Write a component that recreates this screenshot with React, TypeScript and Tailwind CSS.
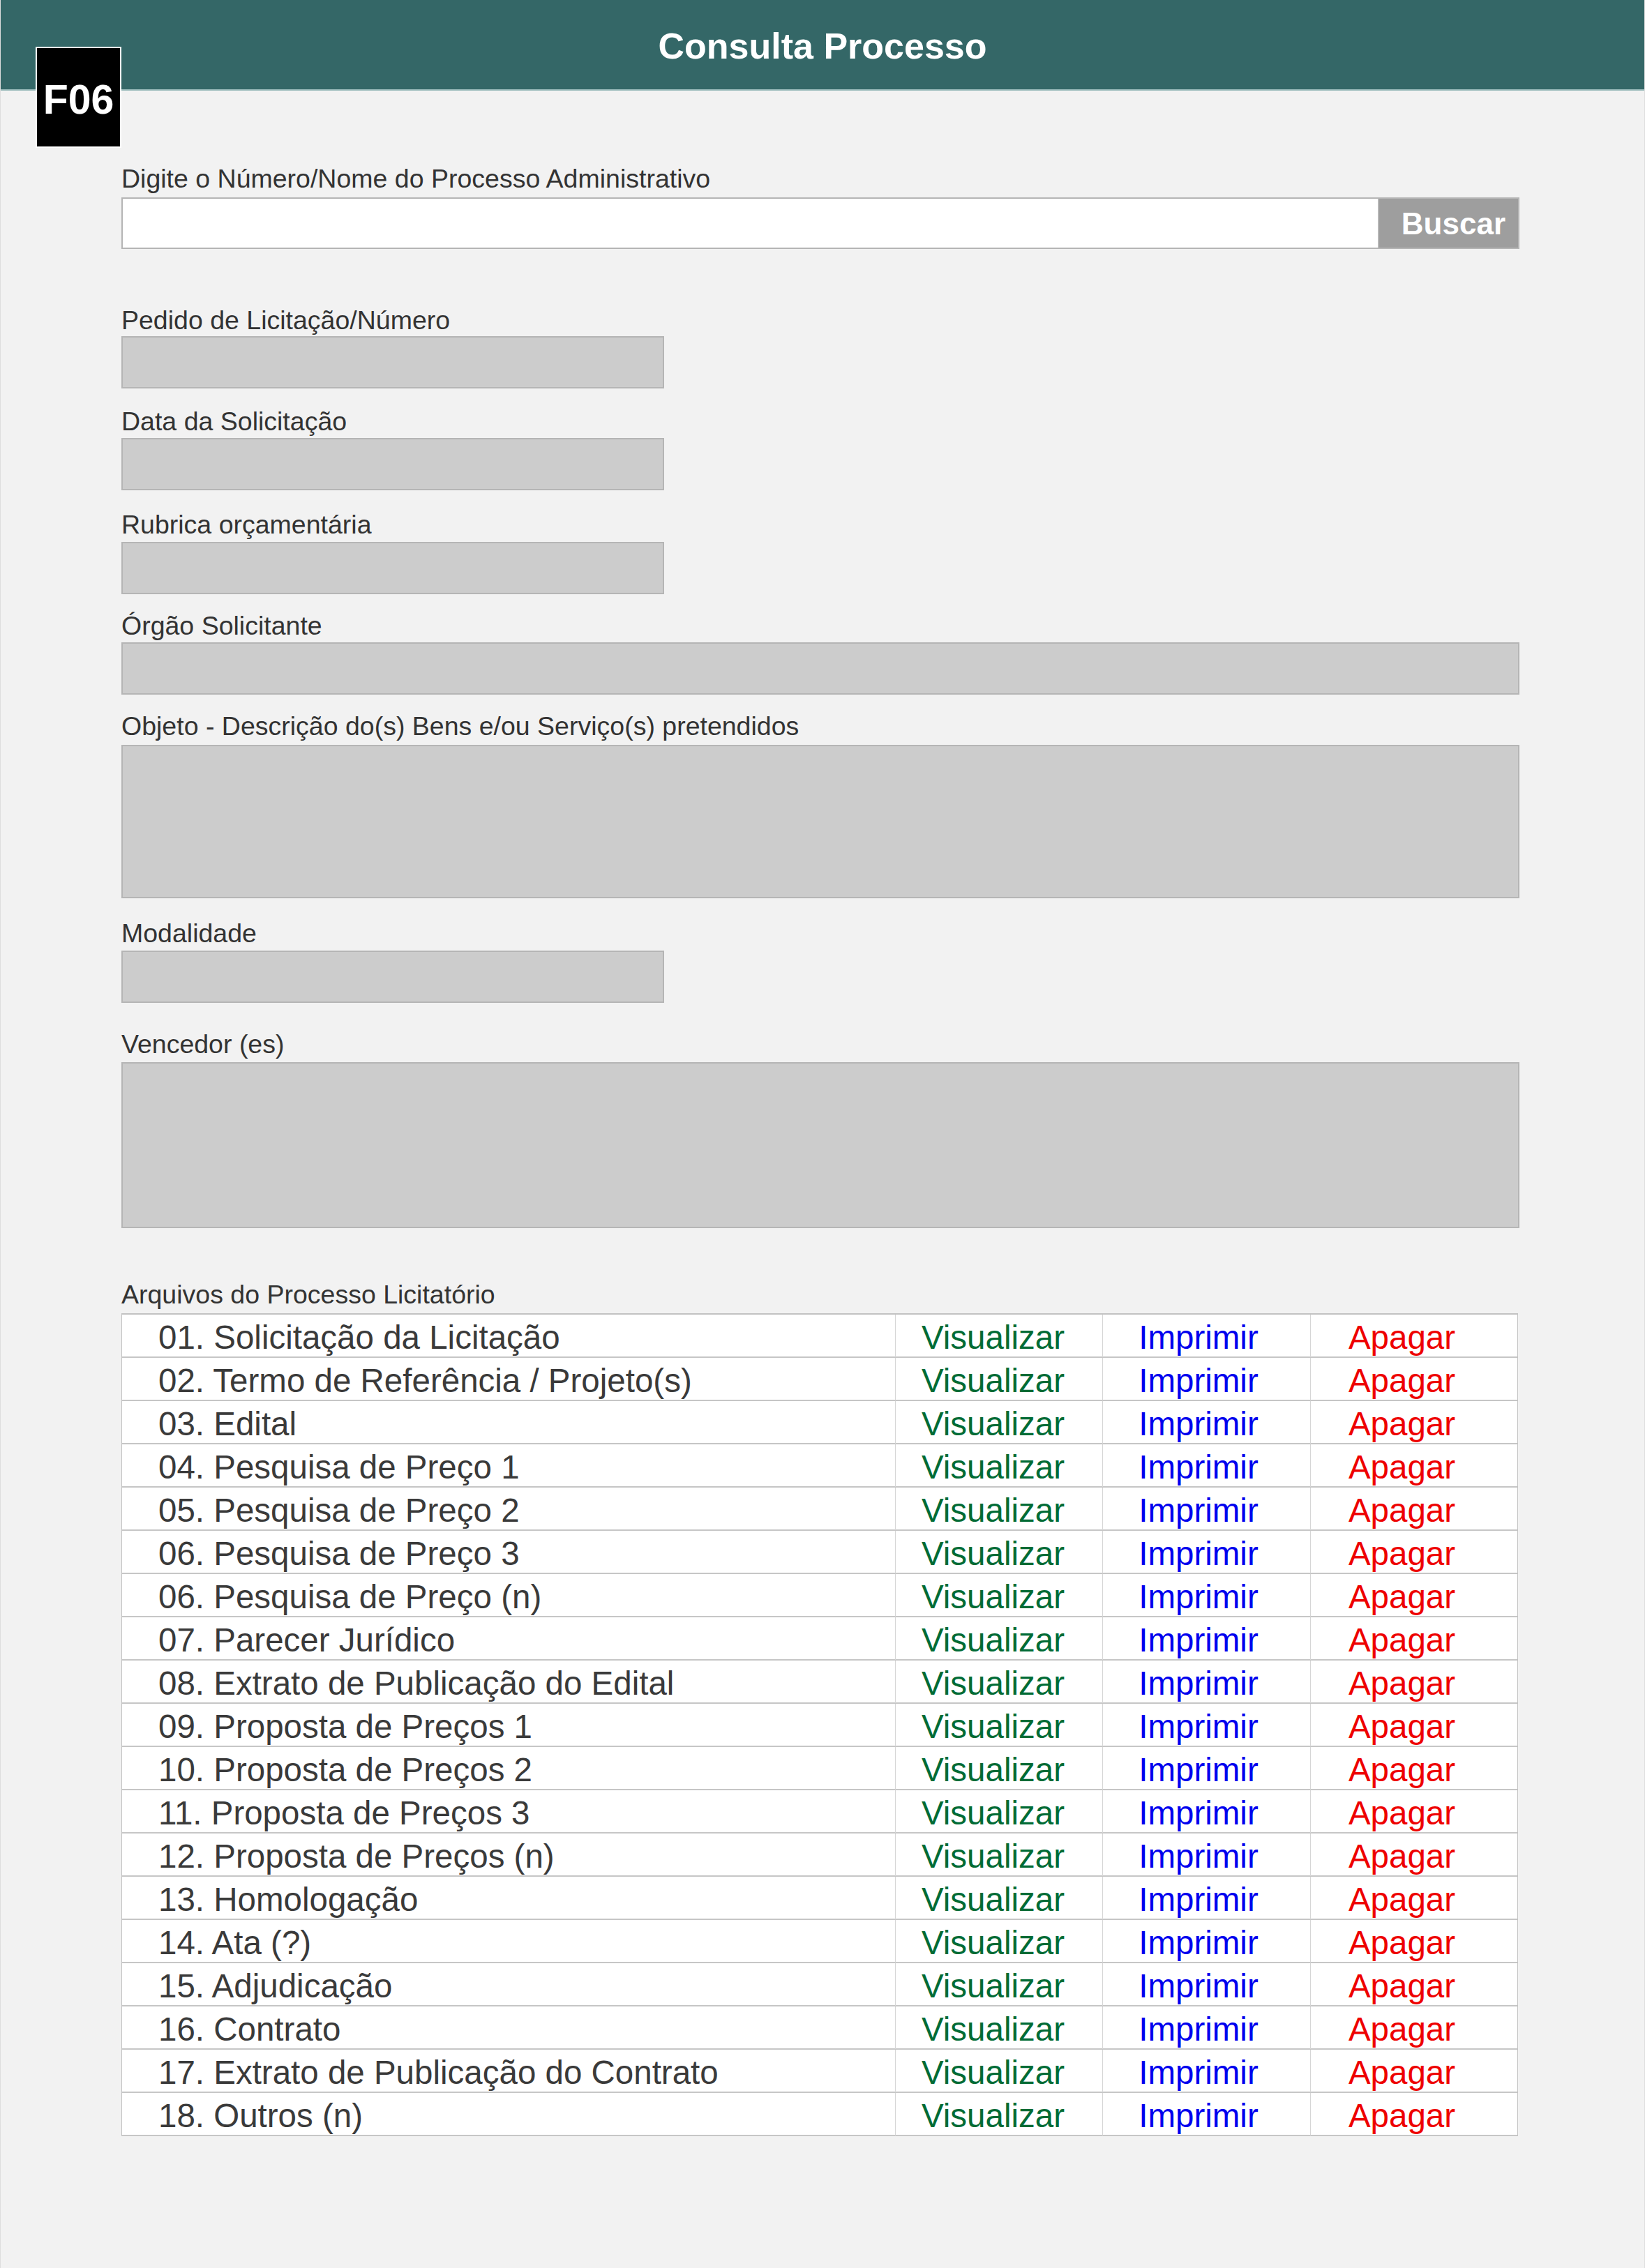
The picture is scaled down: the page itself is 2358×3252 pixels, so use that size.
const rows = [
  '01. Solicitação da Licitação',
  '02. Termo de Referência / Projeto(s)',
  '03. Edital',
  '04. Pesquisa de Preço 1',
  '05. Pesquisa de Preço 2',
  '06. Pesquisa de Preço 3',
  '06. Pesquisa de Preço (n)',
  '07. Parecer Jurídico',
  '08. Extrato de Publicação do Edital',
  '09. Proposta de Preços 1',
  '10. Proposta de Preços 2',
  '11. Proposta de Preços 3',
  '12. Proposta de Preços (n)',
  '13. Homologação',
  '14. Ata (?)',
  '15. Adjudicação',
  '16. Contrato',
  '17. Extrato de Publicação do Contrato',
  '18. Outros (n)',
];

interface FieldProps {
  label: string;
  labelClass: string;
  boxClass: string;
}

function Field({ label, labelClass, boxClass }: FieldProps) {
  return (
    <div className="flex flex-col">
      <p className={`text-[37.5px] leading-[37px] text-[#333333] ${labelClass}`}>{label}</p>
      <div className={`border-2 border-[#b5b5b5] bg-[#cccccc] ${boxClass}`} />
    </div>
  );
}

export default function App() {
  return (
    <div className="relative min-h-[3252px] w-full border-x border-[#dedede] bg-[#f2f2f2] font-['Liberation_Sans',Arial,sans-serif]">
      <header className="flex h-[130px] items-center justify-center border-b-2 border-[#9cbcbc] bg-[#346767] pt-[3px]">
        <h1 className="text-[52px] font-bold leading-none text-white">Consulta Processo</h1>
      </header>

      <div className="absolute left-[50px] top-[67px] flex h-[145px] w-[123px] items-center justify-center border-2 border-white bg-black pt-[8px] text-[59px] font-bold leading-none text-white">
        F06
      </div>

      <main className="ml-[173px] w-[2004px] pt-[108px] pb-[190px]">
        <p className="mb-[8px] text-[37.5px] leading-[37px] text-[#333333]">
          Digite o Número/Nome do Processo Administrativo
        </p>
        <div className="flex h-[74px]">
          <div className="w-[1801px] border-2 border-r-0 border-[#b5b5b5] bg-white" />
          <button className="flex flex-1 items-center justify-end border-2 border-[#b5b5b5] bg-[#9e9e9e] pr-[18px] pt-[2px] text-[44px] font-bold leading-none text-white">
            Buscar
          </button>
        </div>

        <div className="mt-[84px]">
          <Field label="Pedido de Licitação/Número" labelClass="mb-[4px]" boxClass="h-[75px] w-[778px]" />
        </div>
        <div className="mt-[29px]">
          <Field label="Data da Solicitação" labelClass="mb-[5px]" boxClass="h-[75px] w-[778px]" />
        </div>
        <div className="mt-[31px]">
          <Field label="Rubrica orçamentária" labelClass="mb-[6px]" boxClass="h-[75px] w-[778px]" />
        </div>
        <div className="mt-[27px]">
          <Field label="Órgão Solicitante" labelClass="mb-[5px]" boxClass="h-[75px] w-full" />
        </div>
        <div className="mt-[27px]">
          <Field
            label="Objeto - Descrição do(s) Bens e/ou Serviço(s) pretendidos"
            labelClass="mb-[8px]"
            boxClass="h-[220px] w-full"
          />
        </div>
        <div className="mt-[32px]">
          <Field label="Modalidade" labelClass="mb-[6px]" boxClass="h-[75px] w-[778px]" />
        </div>
        <div className="mt-[41px]">
          <Field label="Vencedor (es)" labelClass="mb-[7px]" boxClass="h-[238px] w-full" />
        </div>

        <p className="mt-[77px] mb-[8px] text-[37.5px] leading-[37px] text-[#333333]">
          Arquivos do Processo Licitatório
        </p>
        <div className="w-[2002px] border-x border-t-2 border-[#c2c2c2] bg-white">
          {rows.map((r) => (
            <div
              key={r}
              className="grid h-[62px] grid-cols-[1108px_297px_298px_1fr] border-b-2 border-[#c6c6c6] text-[47.5px] leading-[56px]"
            >
              <div className="truncate pl-[52px] pt-[5px] text-[#3a3a3a]">{r}</div>
              <div className="border-l border-[#d6d6d6] pt-[5px] pr-[17px] text-center text-[#006b35]">
                Visualizar
              </div>
              <div className="border-l border-[#d6d6d6] pt-[5px] pr-[23px] text-center text-[#0000ee]">
                Imprimir
              </div>
              <div className="border-l border-[#d6d6d6] pt-[5px] pr-[35px] text-center text-[#ee0000]">
                Apagar
              </div>
            </div>
          ))}
        </div>
      </main>
    </div>
  );
}
